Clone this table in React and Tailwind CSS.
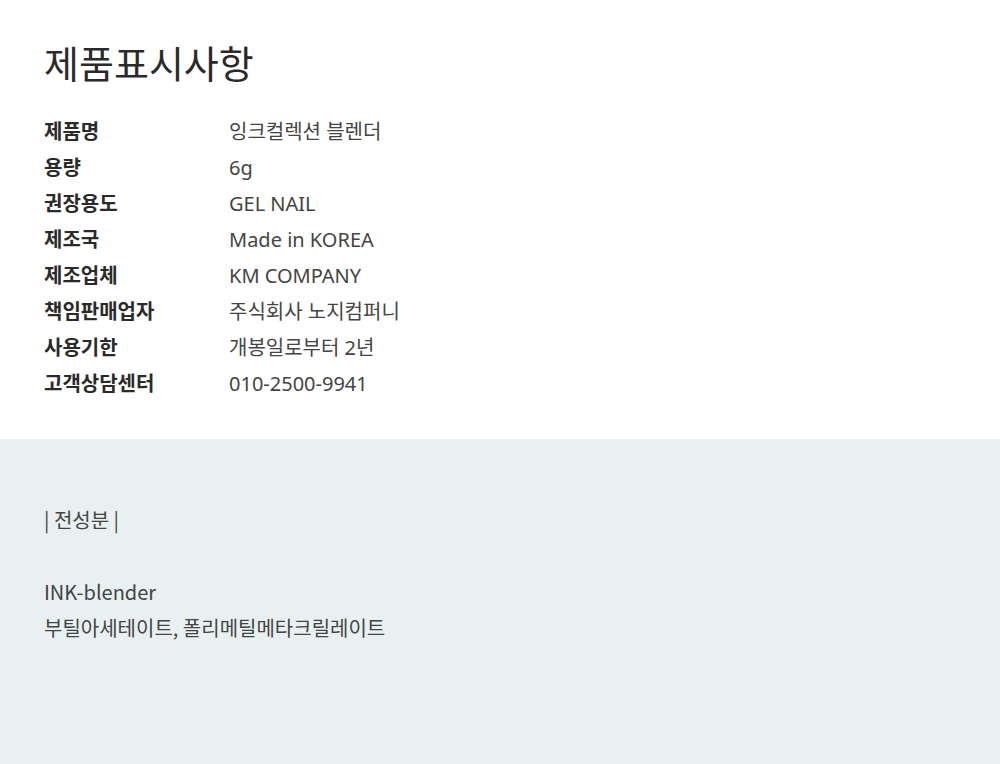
const rows = [
  ["제품명", "잉크컬렉션 블렌더"],
  ["용량", "6g"],
  ["권장용도", "GEL NAIL"],
  ["제조국", "Made in KOREA"],
  ["제조업체", "KM COMPANY"],
  ["책임판매업자", "주식회사 노지컴퍼니"],
  ["사용기한", "개봉일로부터 2년"],
  ["고객상담센터", "010-2500-9941"],
];

export default function App() {
  return (
    <div
      className="w-[1000px] min-h-[764px] bg-white text-[#333]"
      style={{ fontFamily: '"Noto Sans", "Noto Sans CJK KR", sans-serif' }}
    >
      <div className="px-[44px] pt-[36px] pb-[37px]">
        <h1 className="text-[38px] leading-[54px] font-normal text-[#2a2a2a]">제품표시사항</h1>
        <div className="mt-[24px]">
          {rows.map(([label, value]) => (
            <div key={label} className="flex text-[20px] leading-[36px]">
              <div className="w-[185px] font-bold text-[#2a2a2a]">{label}</div>
              <div className="text-[#444]">{value}</div>
            </div>
          ))}
        </div>
      </div>
      <div
        className="bg-[#e8f0f1] h-[325px] px-[44px] pt-[63px] text-[20px] leading-[36px] text-[#444]"
        style={{ fontFamily: '"Noto Sans CJK KR", "Noto Sans", sans-serif' }}
      >
        <p>| 전성분 |</p>
        <p className="mt-[36px]">INK-blender</p>
        <p>부틸아세테이트, 폴리메틸메타크릴레이트</p>
      </div>
    </div>
  );
}
